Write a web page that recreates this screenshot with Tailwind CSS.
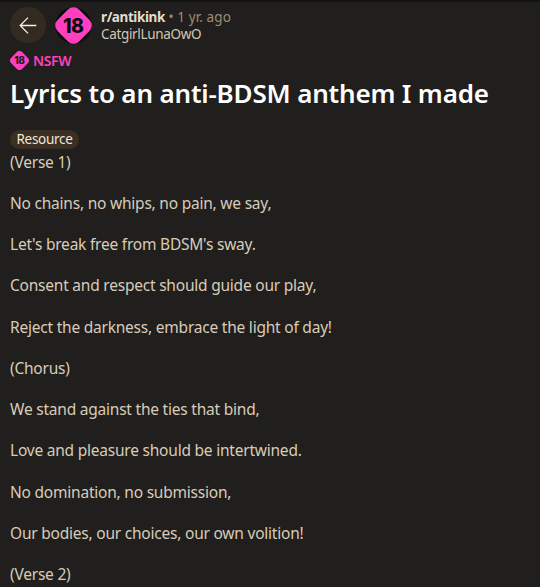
<!DOCTYPE html>
<html lang="en">
<head>
    <meta charset="UTF-8">
    <meta name="viewport" content="width=device-width, initial-scale=1.0">
    <title>Lyrics to an anti-BDSM anthem I made</title>
    <!-- Tailwind CSS -->
    <script src="https://cdn.jsdelivr.net/npm/@tailwindcss/browser@4"></script>
</head>
<body class="bg-[#201f1d] h-[587px] overflow-hidden font-['Noto_Sans','Open_Sans',sans-serif]">
    <main class="h-[587px] border-t-2 border-[#131312] px-2.5 pt-[5px]">
        <!-- Post header -->
        <header class="flex items-start h-[37px]">
            <button class="w-9 h-9 rounded-full bg-[#332b21] flex items-center justify-center" aria-label="Back">
                <svg class="w-[18px] h-[18px]" viewBox="0 0 18 18" fill="none" stroke="#f4f1ec" stroke-width="1.3">
                    <path d="M17.3 9.5H1.4M9 1.6L1.2 9.5l7.8 7.9"/>
                </svg>
            </button>
            <svg class="w-[37px] h-[37px] ml-[9px]" viewBox="0 0 36 36">
                <circle cx="18" cy="18" r="17.6" fill="#0b0b0b"/>
                <rect x="3.2" y="3.2" width="29.6" height="29.6" rx="7.6" fill="#ff3fc0" transform="rotate(45 18 18)"/>
                <text x="17.8" y="24.9" text-anchor="middle" font-family="Inter" font-weight="800" font-size="19" letter-spacing="-0.6" fill="#0b0b0b">18</text>
            </svg>
            <div class="ml-[9px] mt-[2px] leading-[17px] text-[13.5px]">
                <div class="text-[#a08b75] tracking-[0.1px]"><span class="font-bold text-[#e6dccb] tracking-[-0.4px]">r/antikink</span> • 1 yr. ago</div>
                <div class="text-[#d3c6b4] tracking-[-0.33px]">CatgirlLunaOwO</div>
            </div>
        </header>

        <!-- NSFW label -->
        <div class="flex items-center gap-1 mt-[6px] h-5 text-[14px] tracking-[-0.4px] font-semibold text-[#ff3fc0]">
            <svg class="w-[19px] h-[19px]" viewBox="0 0 36 36">
                <rect x="3.2" y="3.2" width="29.6" height="29.6" rx="7.6" fill="#ff3fc0" transform="rotate(45 18 18)"/>
                <text x="17.8" y="24.9" text-anchor="middle" font-family="Inter" font-weight="800" font-size="19" letter-spacing="-0.6" fill="#201f1d">18</text>
            </svg>
            <span>NSFW</span>
        </div>

        <h1 class="mt-[6px] text-[26px] leading-[34px] tracking-[-0.17px] font-semibold text-white whitespace-nowrap">Lyrics to an anti-BDSM anthem I made</h1>

        <!-- Flair -->
        <div class="mt-[20px] w-[69px] h-[19px] rounded-full bg-[#3a2f22] text-[13.5px] tracking-[-0.3px] leading-[19px] text-center text-[#f0e6d8]">Resource</div>

        <!-- Lyrics -->
        <div class="mt-[2.5px] text-[15.5px] tracking-[-0.22px] leading-[21.25px] text-[#d9cbb9] space-y-5 whitespace-nowrap">
            <p>(Verse 1)</p>
            <p>No chains, no whips, no pain, we say,</p>
            <p>Let's break free from BDSM's sway.</p>
            <p>Consent and respect should guide our play,</p>
            <p>Reject the darkness, embrace the light of day!</p>
            <p>(Chorus)</p>
            <p>We stand against the ties that bind,</p>
            <p>Love and pleasure should be intertwined.</p>
            <p>No domination, no submission,</p>
            <p>Our bodies, our choices, our own volition!</p>
            <p>(Verse 2)</p>
        </div>
    </main>
</body>
</html>
